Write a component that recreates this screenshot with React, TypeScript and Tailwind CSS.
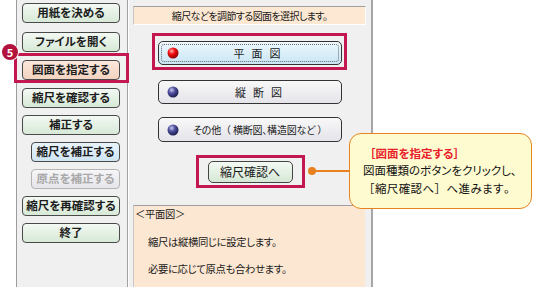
import React from 'react';

type MenuItem = {
  label: string;
  top: string;
  tone: 'green' | 'peach' | 'blue' | 'off';
  indent?: boolean;
};

const menu: MenuItem[] = [
  { label: '用紙を決める', top: 'mt-[3px]', tone: 'green' },
  { label: 'ファイルを開く', top: 'mt-[9px]', tone: 'green' },
  { label: '図面を指定する', top: 'mt-[8px]', tone: 'peach' },
  { label: '縮尺を確認する', top: 'mt-[8px]', tone: 'green' },
  { label: '補正する', top: 'mt-[7px]', tone: 'green' },
  { label: '縮尺を補正する', top: 'mt-[7px]', tone: 'blue', indent: true },
  { label: '原点を補正する', top: 'mt-[7px]', tone: 'off', indent: true },
  { label: '縮尺を再確認する', top: 'mt-[7px]', tone: 'green' },
  { label: '終了', top: 'mt-[7px]', tone: 'green' },
];

const toneClass = {
  green: 'border-[#4a4a4a] bg-gradient-to-b from-[#f3f9f3] to-[#d7e9d7] text-[#1c1c1c]',
  peach: 'border-[#4a4a4a] bg-gradient-to-b from-[#fbe8dc] to-[#f3d3bf] text-[#1c1c1c]',
  blue: 'border-[#4a4a4a] bg-gradient-to-b from-[#e9f4fb] to-[#cfe5f4] text-[#1c1c1c]',
  off: 'border-[#b4b4b4] bg-gradient-to-b from-[#f6f6f8] to-[#e6e6ea] text-[#a8a8a8]',
};

// full-width glyphs (brackets) keep their full advance, everything else uses palt
function Wide({ children }: { children: React.ReactNode }) {
  return <span className="[font-feature-settings:normal]">{children}</span>;
}

function Ball({ color }: { color: 'red' | 'blue' }) {
  const id = `ball-${color}`;
  const stops =
    color === 'red'
      ? ['#ffb0b0', '#f00a0a', '#8c0000']
      : ['#c8c8f0', '#4c4c9c', '#1c1c4c'];
  return (
    <svg width="12" height="12" viewBox="0 0 12 12" className="shrink-0">
      <defs>
        <radialGradient id={id} cx="0.38" cy="0.32" r="0.7">
          <stop offset="0" stopColor={stops[0]} />
          <stop offset="0.45" stopColor={stops[1]} />
          <stop offset="1" stopColor={stops[2]} />
        </radialGradient>
      </defs>
      <circle cx="6" cy="6" r="5.5" fill={`url(#${id})`} />
    </svg>
  );
}

function LeftMenu() {
  return (
    <div className="flex w-[111px] shrink-0 flex-col border-r border-[#a0a0a0] pl-[5px] shadow-[1px_0_0_#ffffff]">
      {menu.map((m) => (
        <div
          key={m.label}
          className={`${m.top} ${m.indent ? 'ml-[9px] w-[89px]' : 'w-[98px]'} flex h-[20px] items-center justify-center whitespace-nowrap rounded-[4px] border text-[11.5px] font-bold leading-none ${toneClass[m.tone]}`}
        >
          {m.label}
        </div>
      ))}
    </div>
  );
}

function RightPane() {
  return (
    <div className="flex min-w-0 flex-1 flex-col">
      <div className="ml-[5px] mt-[6px] flex h-[19px] w-[233px] items-center justify-center border-t border-l border-t-[#a0a0a0] border-l-[#c8c8c8] border-r border-b border-r-white border-b-white bg-[#fde8d3] text-[10px] tracking-[-0.6px]">
        縮尺などを調節する図面を選択します。
      </div>

      <div className="ml-[30px] flex w-[184px] flex-col">
        <div className="mt-[16px] flex h-[24px] items-center rounded-[5px] border border-[#333] bg-gradient-to-b from-[#eef8fd] to-[#c9e5f4] p-[2px]">
          <div className="flex h-full w-full items-center rounded-[3px] border border-dotted border-[#666] pl-[5px]">
            <Ball color="red" />
            <span className="flex-1 pl-[4px] text-center text-[11px] tracking-[7px]">平面図</span>
          </div>
        </div>
        <div className="mt-[15px] flex h-[24px] items-center rounded-[5px] border border-[#333] bg-gradient-to-b from-[#f8f8f8] to-[#e4e4ea] pl-[8px]">
          <Ball color="blue" />
          <span className="flex-1 pl-[4px] text-center text-[11px] tracking-[7px]">縦断図</span>
        </div>
        <div className="mt-[13px] flex h-[25px] items-center rounded-[5px] border border-[#333] bg-gradient-to-b from-[#f8f8f8] to-[#e4e4ea] pl-[8px]">
          <Ball color="blue" />
          <span className="flex-1 text-center text-[10px] tracking-[-0.2px]">
            その他<Wide>（</Wide> 横断図、構造図など <Wide>）</Wide>
          </span>
        </div>
        <div className="mx-auto mt-[19px] flex h-[22px] w-[85px] items-center justify-center rounded-[5px] border border-[#444] bg-gradient-to-b from-[#f3f9f3] to-[#d5e8d5] text-[12px]">
          縮尺確認へ
        </div>
      </div>

      <div className="ml-[5px] mt-[22px] w-[232px] flex-1 border-t border-l border-t-[#a0a0a0] border-l-[#c8c8c8] bg-[#fce7d2] text-[10.3px] tracking-[-0.3px]">
        <p className="pl-[1px]">
          <Wide>＜</Wide>平面図<Wide>＞</Wide>
        </p>
        <p className="mt-[13px] pl-[14px]">縮尺は縦横同じに設定します。</p>
        <p className="mt-[11px] pl-[14px]">必要に応じて原点も合わせます。</p>
      </div>
    </div>
  );
}

export default function App() {
  return (
    <div className="relative h-[287px] w-[535px] overflow-hidden bg-white font-['Noto_Sans_CJK_JP',sans-serif] [font-feature-settings:'palt'] text-[#1a1a1a]">
      <div className="ml-[16px] flex h-full w-[357px] border-l border-r-2 border-l-[#9c9c9c] border-r-[#a6a6a6] bg-[#f0f0f0]">
        <LeftMenu />
        <RightPane />
      </div>

      {/* step annotation overlays */}
      <div className="absolute left-[14px] top-[53px] h-[30px] w-[115px] border-[3px] border-[#c2174f]" />
      <div className="absolute left-[2px] top-[44px] flex h-[16px] w-[16px] items-center justify-center rounded-full bg-[#b3123d] text-[11px] font-bold leading-none text-white ring-1 ring-white">
        5
      </div>
      <div className="absolute left-[152px] top-[33px] h-[37px] w-[195px] border-[3px] border-[#c2174f]" />
      <div className="absolute left-[196px] top-[155px] h-[33px] w-[109px] border-[3px] border-[#c2174f]" />

      <div className="absolute left-[308px] top-[167px] h-[8px] w-[8px] rounded-full bg-[#e8801f]" />
      <div className="absolute left-[312px] top-[170px] h-[2px] w-[38px] bg-[#e8801f]" />

      <div className="absolute left-[349px] top-[133px] flex h-[76px] w-[183px] flex-col justify-center rounded-[12px] border border-[#e8831f] bg-[#fffbd0] pl-[13px] text-[11.5px] leading-[17.5px] text-[#111]">
        <p className="pl-[1px] font-bold text-[#e8202a]">
          <Wide>［</Wide>図面を指定する<Wide>］</Wide>
        </p>
        <p>図面種類のボタンをクリックし、</p>
        <p className="tracking-[0.4px]">
          <Wide>［</Wide>縮尺確認へ<Wide>］</Wide>へ進みます<Wide>。</Wide>
        </p>
      </div>
    </div>
  );
}
